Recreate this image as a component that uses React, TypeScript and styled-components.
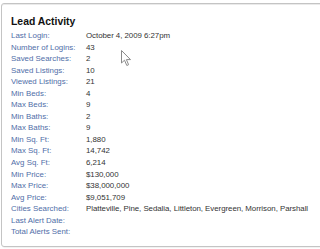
import { Fragment } from 'react';
import styled, { createGlobalStyle } from 'styled-components';

const GlobalStyle = createGlobalStyle`
    html, body {
        margin: 0;
        padding: 0;
        background: #FFFFFF;
        overflow: hidden;
    }
`;

const Page = styled.div`
    position: relative;
    width: 320px;
    height: 249px;
    padding: 3px 0 0 1px;
    box-sizing: border-box;
    overflow: hidden;
    font-family: "Liberation Sans", Arial, sans-serif;
`;

const Panel = styled.section`
    box-sizing: border-box;
    width: 340px;
    height: 244px;
    padding: 11px 0 0 9px;
    border: 1px solid #C4C4C4;
    border-radius: 3px 0 0 3px;
    box-shadow: inset 0 1px 0 #EAEAEA, 1px 1px 1px rgba(0, 0, 0, 0.06);
    background: #FFFFFF;
`;

const Title = styled.h2`
    margin: 0 0 1px;
    font-size: 10.4px;
    line-height: 14px;
    font-weight: bold;
    color: #111111;
`;

const Table = styled.dl`
    display: grid;
    grid-template-columns: 75px 1fr;
    margin: 0;
    font-size: 7.9px;
    line-height: 11.55px;
`;

const Label = styled.dt`
    margin: 0;
    color: #4F6EA8;
    white-space: nowrap;
`;

const Value = styled.dd`
    margin: 0;
    color: #333333;
    white-space: nowrap;
    letter-spacing: -0.05px;
`;

const Cursor = styled.svg`
    position: absolute;
    left: 121px;
    top: 50px;
`;

const rows: [string, string][] = [
    ['Last Login:', 'October 4, 2009 6:27pm'],
    ['Number of Logins:', '43'],
    ['Saved Searches:', '2'],
    ['Saved Listings:', '10'],
    ['Viewed Listings:', '21'],
    ['Min Beds:', '4'],
    ['Max Beds:', '9'],
    ['Min Baths:', '2'],
    ['Max Baths:', '9'],
    ['Min Sq. Ft:', '1,880'],
    ['Max Sq. Ft:', '14,742'],
    ['Avg Sq. Ft:', '6,214'],
    ['Min Price:', '$130,000'],
    ['Max Price:', '$38,000,000'],
    ['Avg Price:', '$9,051,709'],
    ['Cities Searched:', 'Platteville, Pine, Sedalia, Littleton, Evergreen, Morrison, Parshall'],
    ['Last Alert Date:', ''],
    ['Total Alerts Sent:', ''],
];

export default function App() {
    return (
        <Page>
            <GlobalStyle />
            <Panel>
                <Title>Lead Activity</Title>
                <Table>
                    {rows.map(([label, value]) => (
                        <Fragment key={label}>
                            <Label>{label}</Label>
                            <Value>{value || '\u00a0'}</Value>
                        </Fragment>
                    ))}
                </Table>
            </Panel>
            <Cursor width="11" height="17" viewBox="0 0 11 17">
                <path
                    d="M0.5 0.5 L0.5 13 L3.5 10.2 L5.8 15.5 L7.6 14.7 L5.4 9.6 L9.5 9.6 Z"
                    fill="#FFFFFF"
                    stroke="#8A8A8A"
                    strokeWidth="1"
                    strokeLinejoin="round"
                />
            </Cursor>
        </Page>
    );
}
